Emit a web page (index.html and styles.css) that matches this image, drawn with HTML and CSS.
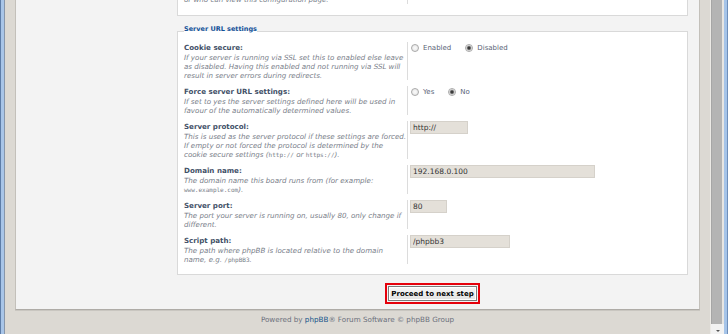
FILE: index.html
```html
<!DOCTYPE html>
<html lang="en">
<head>
    <meta charset="UTF-8">
    <title>phpBB3 Installation</title>
    <link rel="stylesheet" href="styles.css">
</head>
<body>
    <div class="window">
        <div class="frame-left"></div>

        <div class="viewport">
            <div class="panel">
                <div class="main">
                    <fieldset class="prev">
                        <dl>
                            <dt>
                                <label>Board disable message:</label>
                                <span class="explain">This message is shown to users when the board is disabled,<br>or who can view this configuration page.</span>
                            </dt>
                            <dd></dd>
                        </dl>
                    </fieldset>

                    <fieldset>
                        <legend>Server URL settings</legend>
                        <dl>
                            <dt>
                                <label>Cookie secure:</label>
                                <span class="explain">If your server is running via SSL set this to enabled else leave<br>as disabled. Having this enabled and not running via SSL will<br>result in server errors during redirects.</span>
                            </dt>
                            <dd class="radios">
                                <label><input type="radio" name="cookie_secure"> Enabled</label>
                                <label><input type="radio" name="cookie_secure" checked> Disabled</label>
                            </dd>
                        </dl>
                        <dl>
                            <dt>
                                <label>Force server URL settings:</label>
                                <span class="explain">If set to yes the server settings defined here will be used in<br>favour of the automatically determined values.</span>
                            </dt>
                            <dd class="radios">
                                <label><input type="radio" name="force_server_vars"> Yes</label>
                                <label><input type="radio" name="force_server_vars" checked> No</label>
                            </dd>
                        </dl>
                        <dl>
                            <dt>
                                <label>Server protocol:</label>
                                <span class="explain">This is used as the server protocol if these settings are forced.<br>If empty or not forced the protocol is determined by the<br>cookie secure settings (<code>http://</code> or <code>https://</code>).</span>
                            </dt>
                            <dd><input class="inputbox protocol" type="text" value="http://"></dd>
                        </dl>
                        <dl>
                            <dt>
                                <label>Domain name:</label>
                                <span class="explain">The domain name this board runs from (for example:<br><code>www.example.com</code>).</span>
                            </dt>
                            <dd><input class="inputbox domain" type="text" value="192.168.0.100"></dd>
                        </dl>
                        <dl>
                            <dt>
                                <label>Server port:</label>
                                <span class="explain">The port your server is running on, usually 80, only change if<br>different.</span>
                            </dt>
                            <dd><input class="inputbox port" type="text" value="80"></dd>
                        </dl>
                        <dl>
                            <dt>
                                <label>Script path:</label>
                                <span class="explain">The path where phpBB is located relative to the domain<br>name, e.g. <code>/phpBB3</code>.</span>
                            </dt>
                            <dd><input class="inputbox path" type="text" value="/phpbb3"></dd>
                        </dl>
                    </fieldset>

                    <div class="submit-buttons">
                        <span class="highlight"><button type="button">Proceed to next step</button></span>
                    </div>
                </div>
            </div>

            <div class="footer">Powered by <a href="#">phpBB</a>&reg; Forum Software &copy; phpBB Group</div>
        </div>

        <div class="scrollbar">
            <div class="thumb"></div>
            <div class="arrow"></div>
        </div>

        <div class="frame-right"></div>
    </div>
</body>
</html>
```

FILE: styles.css
```css
html, body {
    margin: 0;
    height: 100%;
    overflow: hidden;
}

body {
    font-family: "DejaVu Sans", Verdana, sans-serif;
    background-color: #dcd9d3;
    color: #536482;
}

.window {
    display: flex;
    height: 100vh;
}

/* window frame */
.frame-left {
    width: 5px;
    flex: none;
    background: linear-gradient(to right, #5d7da8 0 1px, #a8c5e8 1px 4px, #8796aa 4px);
}

.frame-right {
    width: 4px;
    flex: none;
    background: linear-gradient(to right, #a6c4e8 0 3px, #6f8fba 3px);
}

.scrollbar {
    width: 14px;
    flex: none;
    display: flex;
    flex-direction: column;
    background-color: #e8e6e2;
    border-left: 1px solid #eceae6;
    box-sizing: border-box;
}

.scrollbar .thumb {
    flex: 1;
    margin: 0 2px 0 0;
    background-color: #b4b4b4;
    border-left: 1px solid #a6a6a6;
}

.scrollbar .arrow {
    height: 10px;
    display: flex;
    justify-content: center;
    align-items: center;
    background-color: #f2f2f2;
}

.scrollbar .arrow::before {
    content: "";
    border-left: 2px solid transparent;
    border-right: 2px solid transparent;
    border-top: 2px solid #555;
    margin-top: 3px;
}

/* page */
.viewport {
    flex: 1;
    display: flex;
    flex-direction: column;
    padding: 0 10px;
    overflow: hidden;
}

.panel {
    margin-top: -42px;
    background-color: #f3f3f3;
    border: 1px solid #c3c0ba;
    border-top: 0;
    border-bottom-color: #aeaba6;
    box-shadow: 0 1px 0 #c9c6c0;
    padding: 10px 11px 5px 161px;
}

fieldset {
    margin: 9px 0 0;
    padding: 4px 6px 10px;
    min-inline-size: 0;
    border: 1px solid #d9d9d9;
    background-color: #fff;
}

fieldset.prev {
    margin-top: 0;
    padding: 6px 6px 11px;
}

legend {
    padding: 0 0 4px;
    font-size: 6.5px;
    line-height: 9px;
    font-weight: bold;
    color: #115098;
}

dl {
    display: flex;
    margin: 0;
}

dl + dl {
    margin-top: 6px;
}

dt {
    width: 223px;
    flex: none;
}

dt label {
    display: block;
    font-size: 7.1px;
    line-height: 11px;
    font-weight: bold;
    color: #425067;
}

.explain {
    display: block;
    white-space: nowrap;
    font-size: 7.1px;
    line-height: 9px;
    font-style: italic;
    color: #787d88;
}

.explain code {
    font-family: "DejaVu Sans Mono", monospace;
    font-size: 6px;
    line-height: 1;
    font-style: normal;
}

dd {
    flex: 1;
    margin: 0;
    padding-left: 3px;
    border-left: 1px solid #dcdcdc;
}

dd.radios {
    display: flex;
    align-items: flex-start;
    gap: 14px;
    padding-left: 3px;
}

dd.radios label {
    display: flex;
    align-items: center;
    gap: 4px;
    height: 11px;
    font-size: 7px;
    color: #5a6377;
}

input[type="radio"] {
    appearance: none;
    width: 8px;
    height: 8px;
    margin: 0;
    border: 1px solid #a9a9a9;
    border-radius: 50%;
    background: radial-gradient(circle, #fbfbfb, #e2e2e2);
    box-sizing: border-box;
}

input[type="radio"]:checked {
    background: radial-gradient(circle, #3a3a3a 0 1.2px, #8c8c8c 1.8px, #ededed 2.8px);
}

.inputbox {
    display: block;
    height: 13px;
    box-sizing: border-box;
    margin: 0 0 0 -1px;
    padding: 0 2px;
    border: 1px solid #d5d1ca;
    background-color: #e4e0d9;
    font-family: "DejaVu Sans", Verdana, sans-serif;
    font-size: 7.5px;
    color: #333;
}

.inputbox.protocol { width: 58px; }
.inputbox.domain { width: 185px; }
.inputbox.port { width: 37px; }
.inputbox.path { width: 100px; }

.submit-buttons {
    margin-top: 8px;
    text-align: center;
}

.highlight {
    display: inline-block;
    vertical-align: top;
    border: 2px solid #e5000b;
    padding: 1px;
}

.highlight button {
    display: block;
    height: 15px;
    padding: 0 2px;
    border: 1px solid #7b7b7b;
    background: linear-gradient(#f7f7f7, #e1e1e1);
    box-shadow: inset 0 0 0 1px #fff;
    font-family: "DejaVu Sans", Verdana, sans-serif;
    font-size: 7px;
    font-weight: bold;
    color: #000;
}

.footer {
    padding-top: 5px;
    text-align: center;
    font-size: 7.2px;
    line-height: 9px;
    color: #6a6f7b;
}

.footer a {
    color: #105289;
    text-decoration: none;
}
```
